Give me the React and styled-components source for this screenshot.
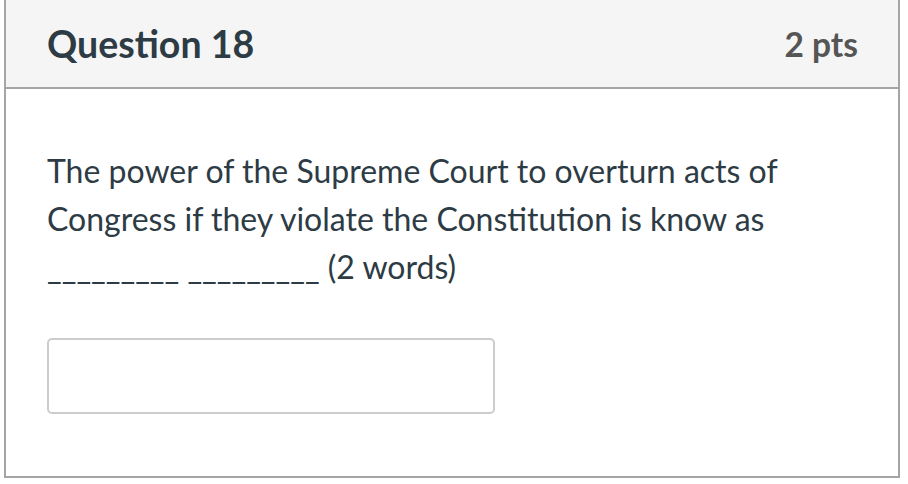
import React from "react";
import styled, { createGlobalStyle } from "styled-components";

const Global = createGlobalStyle`
  html, body { margin: 0; padding: 0; background: #fff; }
  body { font-family: Lato, "Noto Sans", sans-serif; }
`;

const Card = styled.div`
  box-sizing: border-box;
  width: 896px;
  height: 480px;
  margin: -2px 0 0 4px;
  border: 2px solid #a5a5a5;
  display: flex;
  flex-direction: column;
`;

const Header = styled.div`
  box-sizing: border-box;
  height: 89px;
  background: #f5f5f5;
  border-bottom: 2px solid #a5a5a5;
  display: flex;
  align-items: center;
  justify-content: space-between;
  padding: 0 40px 0 41px;
`;

const Title = styled.h2`
  margin: 0;
  font-size: 37.5px;
  font-weight: 700;
  color: #2d3b45;
`;

const Points = styled.span`
  font-size: 33.5px;
  font-weight: 700;
  color: #555;
`;

const Body = styled.div`
  padding: 58px 41px 0;
  display: flex;
  flex-direction: column;
`;

const Prompt = styled.p`
  margin: 0;
  font-size: 32px;
  line-height: 48px;
  color: #2d3b45;
`;

const Answer = styled.div`
  box-sizing: border-box;
  margin-top: 47px;
  width: 448px;
  height: 76px;
  border: 2px solid #cccccc;
  border-radius: 5px;
  background: #fff;
`;

export default function App() {
  return (
    <>
      <Global />
      <Card>
        <Header>
          <Title>Question 18</Title>
          <Points>2 pts</Points>
        </Header>
        <Body>
          <Prompt>
            The power of the Supreme Court to overturn acts of
            <br />
            Congress if they violate the Constitution is know as
            <br />
            _________ _________ (2 words)
          </Prompt>
          <Answer />
        </Body>
      </Card>
    </>
  );
}
